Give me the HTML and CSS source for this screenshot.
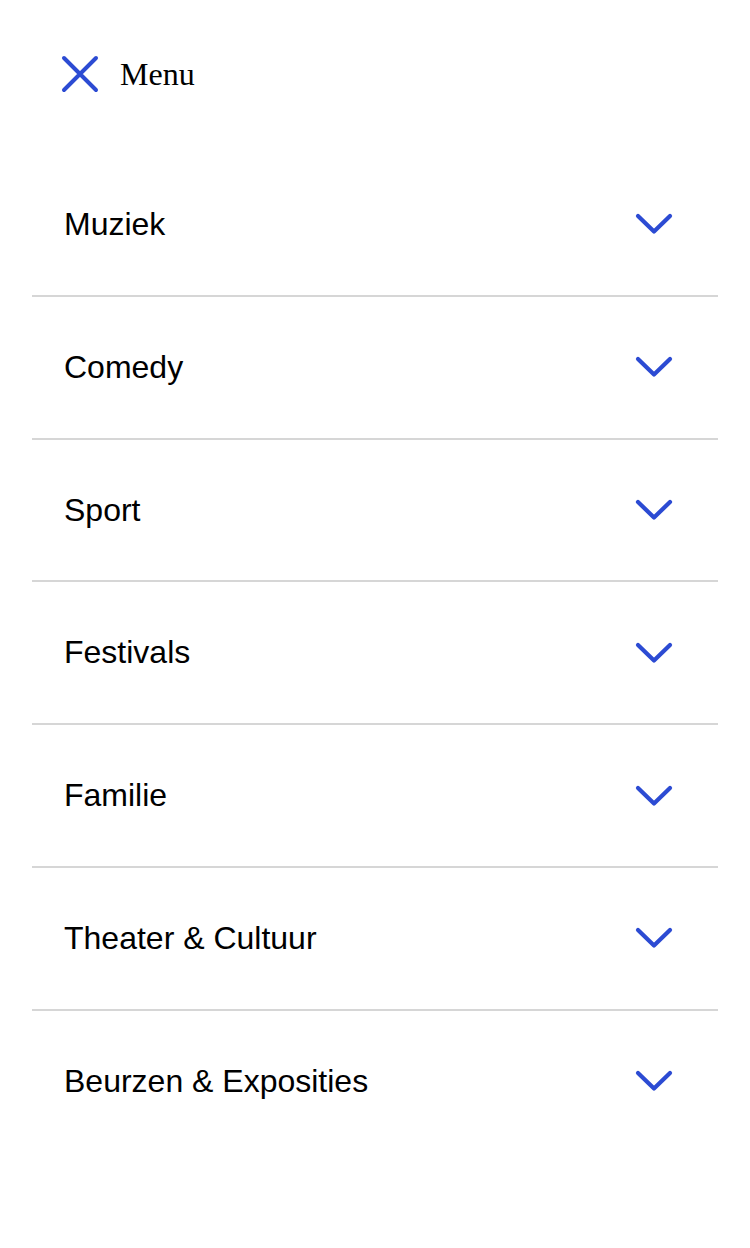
FILE: index.html
```html
<!DOCTYPE html>
<html lang="nl">
<head>
<meta charset="utf-8">
<title>Menu</title>
<link rel="stylesheet" href="styles.css">
</head>
<body>
<header class="menu-header">
  <button class="close-btn" type="button" aria-label="Sluiten">
    <svg class="close-icon" width="40" height="40" viewBox="0 0 40 40" aria-hidden="true">
      <path d="M4 4 L36 36 M36 4 L4 36" fill="none" stroke="currentColor" stroke-width="4" stroke-linecap="round"/>
    </svg>
  </button>
  <span class="menu-title">Menu</span>
</header>
<nav class="menu-list">
  <div class="menu-item"><span class="menu-label">Muziek</span><svg class="chevron" width="40" height="24" viewBox="0 0 40 24" aria-hidden="true"><path d="M4 4 L20 19.5 L36 4" fill="none" stroke="currentColor" stroke-width="4.2" stroke-linecap="round" stroke-linejoin="round"/></svg></div>
  <div class="menu-item"><span class="menu-label">Comedy</span><svg class="chevron" width="40" height="24" viewBox="0 0 40 24" aria-hidden="true"><path d="M4 4 L20 19.5 L36 4" fill="none" stroke="currentColor" stroke-width="4.2" stroke-linecap="round" stroke-linejoin="round"/></svg></div>
  <div class="menu-item"><span class="menu-label">Sport</span><svg class="chevron" width="40" height="24" viewBox="0 0 40 24" aria-hidden="true"><path d="M4 4 L20 19.5 L36 4" fill="none" stroke="currentColor" stroke-width="4.2" stroke-linecap="round" stroke-linejoin="round"/></svg></div>
  <div class="menu-item"><span class="menu-label">Festivals</span><svg class="chevron" width="40" height="24" viewBox="0 0 40 24" aria-hidden="true"><path d="M4 4 L20 19.5 L36 4" fill="none" stroke="currentColor" stroke-width="4.2" stroke-linecap="round" stroke-linejoin="round"/></svg></div>
  <div class="menu-item"><span class="menu-label">Familie</span><svg class="chevron" width="40" height="24" viewBox="0 0 40 24" aria-hidden="true"><path d="M4 4 L20 19.5 L36 4" fill="none" stroke="currentColor" stroke-width="4.2" stroke-linecap="round" stroke-linejoin="round"/></svg></div>
  <div class="menu-item"><span class="menu-label">Theater &amp; Cultuur</span><svg class="chevron" width="40" height="24" viewBox="0 0 40 24" aria-hidden="true"><path d="M4 4 L20 19.5 L36 4" fill="none" stroke="currentColor" stroke-width="4.2" stroke-linecap="round" stroke-linejoin="round"/></svg></div>
  <div class="menu-item"><span class="menu-label">Beurzen &amp; Exposities</span><svg class="chevron" width="40" height="24" viewBox="0 0 40 24" aria-hidden="true"><path d="M4 4 L20 19.5 L36 4" fill="none" stroke="currentColor" stroke-width="4.2" stroke-linecap="round" stroke-linejoin="round"/></svg></div>
</nav>
</body>
</html>
```
FILE: styles.css
```css
html, body {
  margin: 0;
  padding: 0;
  background: #ffffff;
}

body {
  font-family: "Liberation Sans", Arial, sans-serif;
  color: #000000;
}

.menu-header {
  display: flex;
  align-items: center;
  gap: 20px;
  padding: 54px 0 60px 60px;
}

.close-btn {
  display: flex;
  padding: 0;
  margin: 0;
  border: 0;
  background: none;
  color: #2c4bd3;
  cursor: pointer;
}

.close-icon {
  display: block;
}

.menu-title {
  font-family: "Liberation Serif", "Times New Roman", serif;
  font-size: 32px;
  line-height: 40px;
}

.menu-list {
  margin: 0 32px;
}

.menu-item {
  display: flex;
  align-items: center;
  justify-content: space-between;
  padding: 48px 44px 48px 32px;
  border-bottom: 2px solid #d6d6d6;
}

.menu-item:last-child {
  border-bottom: none;
}

.menu-label {
  font-size: 32px;
  line-height: 44.8px;
}

.chevron {
  display: block;
  color: #2c4bd3;
}
```
